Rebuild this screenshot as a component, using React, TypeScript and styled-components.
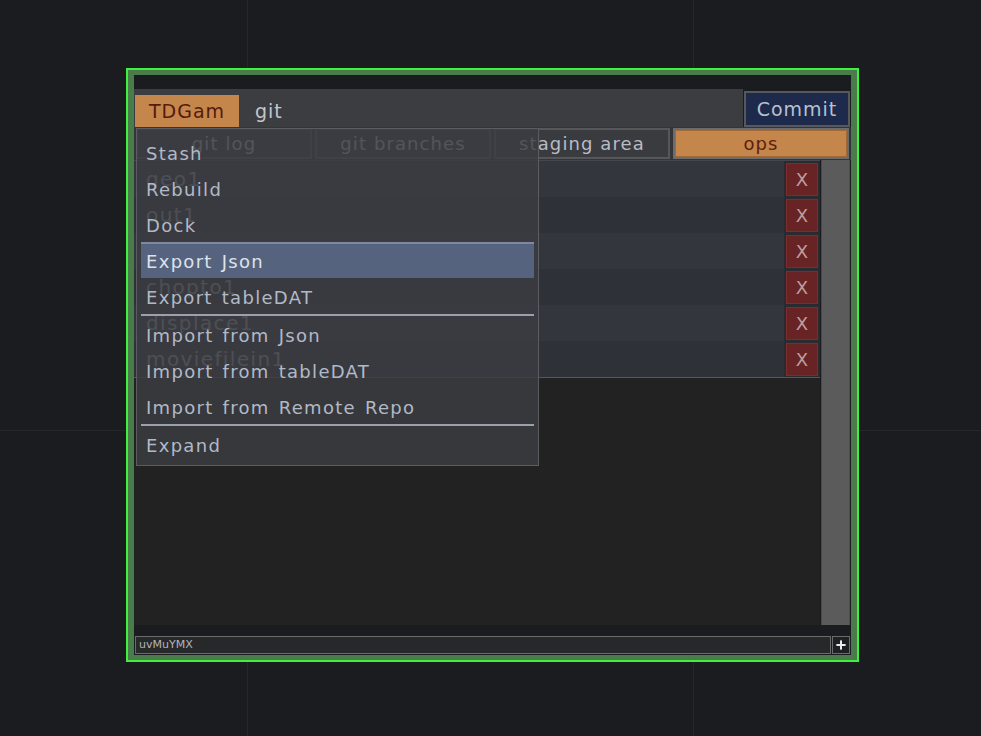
import React from "react";
import styled, { createGlobalStyle } from "styled-components";

const GlobalStyle = createGlobalStyle`
  html, body { margin: 0; padding: 0; height: 100%; }
  body {
    background:
      linear-gradient(#26272b, #26272b) 247px 0 / 1px 100% no-repeat,
      linear-gradient(#26272b, #26272b) 693px 0 / 1px 100% no-repeat,
      linear-gradient(#26272b, #26272b) 0 430px / 100% 1px no-repeat,
      #1b1c20;
    font-family: "DejaVu Sans", "Liberation Sans", sans-serif;
  }
`;

const Page = styled.div`
  padding: 68px 0 0 126px;
`;

const Frame = styled.div`
  box-sizing: border-box;
  width: 733px;
  height: 594px;
  border: 2px solid #3ff03f;
  background: #4a7c4b;
  padding: 5px 6px;
  display: flex;
`;

const Panel = styled.div`
  position: relative;
  flex: 1;
  display: flex;
  flex-direction: column;
  background: #1b1c20;
  overflow: hidden;
`;

const TopGap = styled.div`
  height: 14px;
`;

const Toolbar = styled.div`
  height: 38px;
  display: flex;
`;

const ToolbarMain = styled.div`
  flex: 1;
  display: flex;
  align-items: flex-end;
  background: #3c3d41;
  padding-left: 1px;
`;

const ProjectButton = styled.div`
  width: 104px;
  height: 32px;
  background: #c4864b;
  color: #561a0e;
  font-size: 19px;
  letter-spacing: 1px;
  line-height: 32px;
  text-align: center;
`;

const ToolbarLabel = styled.div`
  margin-left: 16px;
  height: 32px;
  line-height: 32px;
  font-size: 19px;
  letter-spacing: 1px;
  color: #c2c6ce;
`;

const CommitSlot = styled.div`
  width: 108px;
  box-sizing: border-box;
  padding: 2px 1px 0 1px;
  display: flex;
`;

const CommitButton = styled.div`
  flex: 1;
  box-sizing: border-box;
  border: 2px solid #56585c;
  background: #1e2a4b;
  color: #b8c0d2;
  font-size: 19px;
  letter-spacing: 1px;
  display: flex;
  align-items: center;
  justify-content: center;
`;

const TabRow = styled.div`
  height: 33px;
  box-sizing: border-box;
  display: flex;
  gap: 3px;
  padding: 1px 2px 1px 2px;
  background: #343539;
`;

const Tab = styled.div<{ $active?: boolean }>`
  width: 176px;
  box-sizing: border-box;
  border: 2px solid ${(p) => (p.$active ? "#6c6c6c" : "#55575b")};
  background: ${(p) => (p.$active ? "#c4864b" : "#3a3b3f")};
  box-shadow: ${(p) => (p.$active ? "inset 0 0 0 1px #a26a38" : "none")};
  color: ${(p) => (p.$active ? "#5e1e10" : "#b8bcc7")};
  font-size: 18px;
  letter-spacing: 1.1px;
  display: flex;
  align-items: center;
  justify-content: center;
`;

const Body = styled.div`
  flex: 1;
  display: flex;
  min-height: 0;
`;

const ListColumn = styled.div`
  flex: 1;
  display: flex;
  flex-direction: column;
  background: #222222;
`;

const Rows = styled.div`
  border-top: 1px solid #45474c;
  border-bottom: 1px solid #55575c;
  background: #2a2b30;
`;

const Row = styled.div`
  height: 36px;
  display: grid;
  grid-template-columns: 1fr 32px;
  column-gap: 2px;
  padding-right: 2px;
  align-items: center;
`;

const RowLabel = styled.div<{ $alt: boolean }>`
  height: 100%;
  display: flex;
  align-items: center;
  padding-left: 12px;
  background: ${(p) => (p.$alt ? "#2f3138" : "#34363d")};
  color: #9a9ea6;
  font-size: 20px;
  letter-spacing: 1.4px;
`;

const DeleteButton = styled.div`
  height: 33px;
  box-sizing: border-box;
  border: 1px solid #7d2b2b;
  background: #682424;
  color: #bf9c9c;
  font-size: 18px;
  display: flex;
  align-items: center;
  justify-content: center;
`;

const Scrollbar = styled.div`
  width: 29px;
  margin: 0 1px 0 1px;
  box-sizing: border-box;
  background: #5b5b5b;
  border-left: 1px solid #4a4a4a;
  border-right: 1px solid #4f4f4f;
`;

const BottomBar = styled.div`
  height: 30px;
  box-sizing: border-box;
  padding: 11px 1px 1px 1px;
  display: flex;
  gap: 1px;
`;

const NameField = styled.div`
  flex: 1;
  box-sizing: border-box;
  border: 1px solid #6b6b6b;
  background: #27282a;
  color: #b5b5b5;
  font-size: 11px;
  line-height: 16px;
  padding-left: 3px;
`;

const AddButton = styled.div`
  width: 18px;
  box-sizing: border-box;
  border: 1px solid #6b6b6b;
  background: #1f2023;
  display: flex;
  align-items: center;
  justify-content: center;
`;

const Menu = styled.div`
  position: absolute;
  left: 2px;
  top: 53px;
  width: 403px;
  height: 338px;
  box-sizing: border-box;
  border: 1px solid #5b5c61;
  background: rgba(60, 61, 66, 0.82);
  padding: 5px 4px 3px 4px;
  display: flex;
  flex-direction: column;
`;

const MenuItem = styled.div<{ $highlight?: boolean }>`
  height: 36px;
  box-sizing: border-box;
  padding-left: 5px;
  display: flex;
  align-items: center;
  font-size: 18px;
  letter-spacing: 1.3px;
  word-spacing: 2px;
  color: ${(p) => (p.$highlight ? "#dde2ea" : "#b2b9c6")};
  background: ${(p) => (p.$highlight ? "#56637e" : "transparent")};
  border-top: ${(p) => (p.$highlight ? "2px solid #7f889c" : "none")};
  padding-top: ${(p) => (p.$highlight ? "1px" : "3px")};
`;

const MenuSeparator = styled.div`
  height: 2px;
  background: #9aa1ad;
`;

const rows = ["geo1", "out1", "null1", "chopto1", "displace1", "moviefilein1"];

const menuGroups = [
  ["Stash", "Rebuild", "Dock", "Export Json", "Export tableDAT"],
  ["Import from Json", "Import from tableDAT", "Import from Remote Repo"],
  ["Expand"],
];

const PlusIcon = () => (
  <svg width="12" height="12" viewBox="0 0 12 12">
    <path
      d="M6 0.5 L7 5 L11.5 6 L7 7 L6 11.5 L5 7 L0.5 6 L5 5 Z"
      fill="#ececec"
    />
    <rect x="5" y="1.5" width="2" height="9" fill="#ececec" />
    <rect x="1.5" y="5" width="9" height="2" fill="#ececec" />
  </svg>
);

export default function App() {
  return (
    <>
      <GlobalStyle />
      <Page>
        <Frame>
          <Panel>
            <TopGap />
            <Toolbar>
              <ToolbarMain>
                <ProjectButton>TDGam</ProjectButton>
                <ToolbarLabel>git</ToolbarLabel>
              </ToolbarMain>
              <CommitSlot>
                <CommitButton>Commit</CommitButton>
              </CommitSlot>
            </Toolbar>
            <TabRow>
              <Tab>git log</Tab>
              <Tab>git branches</Tab>
              <Tab>staging area</Tab>
              <Tab $active>ops</Tab>
            </TabRow>
            <Body>
              <ListColumn>
                <Rows>
                  {rows.map((name, i) => (
                    <Row key={name}>
                      <RowLabel $alt={i % 2 === 1}>{name}</RowLabel>
                      <DeleteButton>X</DeleteButton>
                    </Row>
                  ))}
                </Rows>
              </ListColumn>
              <Scrollbar />
            </Body>
            <BottomBar>
              <NameField>uvMuYMX</NameField>
              <AddButton>
                <PlusIcon />
              </AddButton>
            </BottomBar>
            <Menu>
              {menuGroups.map((group, gi) => (
                <React.Fragment key={gi}>
                  {gi > 0 && <MenuSeparator />}
                  {group.map((item) => (
                    <MenuItem key={item} $highlight={item === "Export Json"}>
                      {item}
                    </MenuItem>
                  ))}
                </React.Fragment>
              ))}
            </Menu>
          </Panel>
        </Frame>
      </Page>
    </>
  );
}
